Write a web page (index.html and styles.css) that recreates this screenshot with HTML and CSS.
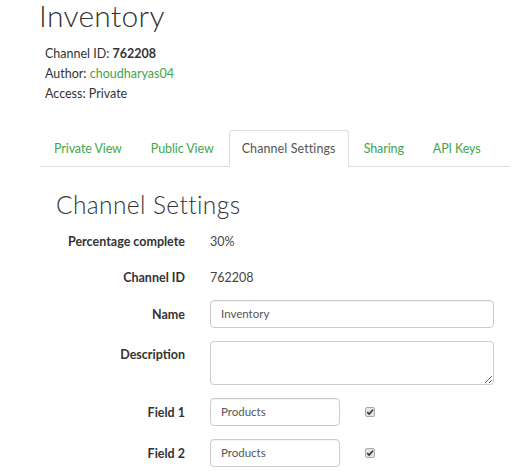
FILE: index.html
```html
<!DOCTYPE html>
<html>
<head>
<meta charset="utf-8">
<link rel="stylesheet" href="styles.css">
</head>
<body>
<div class="page">
  <h1 class="title">Inventory</h1>
  <div class="meta">
    <div>Channel ID: <strong>762208</strong></div>
    <div>Author: <a class="link">choudharyas04</a></div>
    <div>Access: Private</div>
  </div>
  <ul class="tabs">
    <li class="tab">Private View</li>
    <li class="tab">Public View</li>
    <li class="tab active">Channel Settings</li>
    <li class="tab">Sharing</li>
    <li class="tab">API Keys</li>
  </ul>
  <h2 class="section">Channel Settings</h2>
  <div class="form">
    <div class="row static"><div class="label">Percentage complete</div><div class="value">30%</div></div>
    <div class="row static"><div class="label">Channel ID</div><div class="value">762208</div></div>
    <div class="row"><div class="label mid">Name</div><div class="control"><div class="input wide">Inventory</div></div></div>
    <div class="row desc"><div class="label top">Description</div><div class="control"><textarea class="textarea" readonly></textarea></div></div>
    <div class="row"><div class="label mid">Field 1</div><div class="control field"><div class="input short">Products</div><span class="check"><svg viewBox="0 0 10 10" width="8" height="8"><path d="M1.5 5.2 L4 7.6 L8.6 2.2" fill="none" stroke="#333" stroke-width="2"/></svg></span></div></div>
    <div class="row"><div class="label mid">Field 2</div><div class="control field"><div class="input short">Products</div><span class="check"><svg viewBox="0 0 10 10" width="8" height="8"><path d="M1.5 5.2 L4 7.6 L8.6 2.2" fill="none" stroke="#333" stroke-width="2"/></svg></span></div></div>
  </div>
</div>
</body>
</html>
```

FILE: styles.css
```css
html, body {
  margin: 0;
  padding: 0;
  background: #fff;
}
body {
  font-family: "Lato", "Liberation Sans", sans-serif;
  font-size: 13px;
  color: #333;
}
.page {
  width: 521px;
  height: 474px;
  overflow: hidden;
}
.title {
  margin: 0 0 0 39px;
  font-family: "Lato", sans-serif;
  font-weight: 300;
  font-size: 30px;
  line-height: 30px;
  height: 30px;
  color: #333;
  letter-spacing: 0.3px;
}
.meta {
  margin: 14px 0 0 45px;
  line-height: 20px;
  font-size: 12.5px;
  color: #333;
}
.meta strong { font-weight: 700; }
.link { color: #3fa64a; }
.tabs {
  list-style: none;
  margin: 26px 11px 0 40px;
  padding: 0;
  display: flex;
  border-bottom: 1px solid #ddd;
  height: 36px;
}
.tab {
  padding: 0 13px;
  margin-right: 1px;
  line-height: 36px;
  height: 36px;
  color: #3fa64a;
  font-size: 12.5px;
  white-space: nowrap;
  flex: none;
  border: 1px solid transparent;
  border-bottom: none;
  border-radius: 4px 4px 0 0;
  box-sizing: border-box;
  letter-spacing: -0.1px;
}
.tab.active {
  color: #555;
  background: #fff;
  border-color: #ddd;
  height: 37px;
  margin-bottom: -1px;
  padding: 0 12px 0 12px;
  letter-spacing: 0.1px;
}
.section {
  margin: 23px 0 0 56px;
  font-family: "Lato", sans-serif;
  font-weight: 300;
  font-size: 24.5px;
  line-height: 30px;
  color: #333;
  letter-spacing: 0.4px;
}
.form {
  margin: 8px 0 0 40px;
  width: 454px;
}
.row {
  display: grid;
  grid-template-columns: 145px 1fr;
  column-gap: 25px;
  margin-bottom: 13px;
}
.row.static {
  height: 27px;
  margin-bottom: 9px;
  align-items: center;
}
.label {
  text-align: right;
  font-weight: 700;
  font-size: 12.5px;
  color: #333;
}
.label.mid { align-self: center; }
.label.top { padding-top: 6px; }
.value {
  font-size: 12.5px;
  color: #444;
}
.control { display: flex; align-items: center; }
.input {
  box-sizing: border-box;
  height: 28px;
  line-height: 26px;
  border: 1px solid #ccc;
  border-radius: 4px;
  padding: 0 10px;
  font-size: 11.5px;
  color: #555;
  box-shadow: inset 0 1px 1px rgba(0,0,0,0.05);
}
.input.wide { width: 284px; }
.input.short { width: 130px; }
.textarea {
  box-sizing: border-box;
  width: 284px;
  height: 44px;
  border: 1px solid #ccc;
  border-radius: 4px;
  margin: 0;
  padding: 4px 10px;
  display: block;
  font-family: inherit;
  outline: none;
}
.check {
  margin-left: 25px;
  width: 10px;
  height: 10px;
  box-sizing: border-box;
  border: 1px solid #aaa;
  border-radius: 2px;
  background: #e4e4e4;
  display: flex;
  align-items: center;
  justify-content: center;
}
```
